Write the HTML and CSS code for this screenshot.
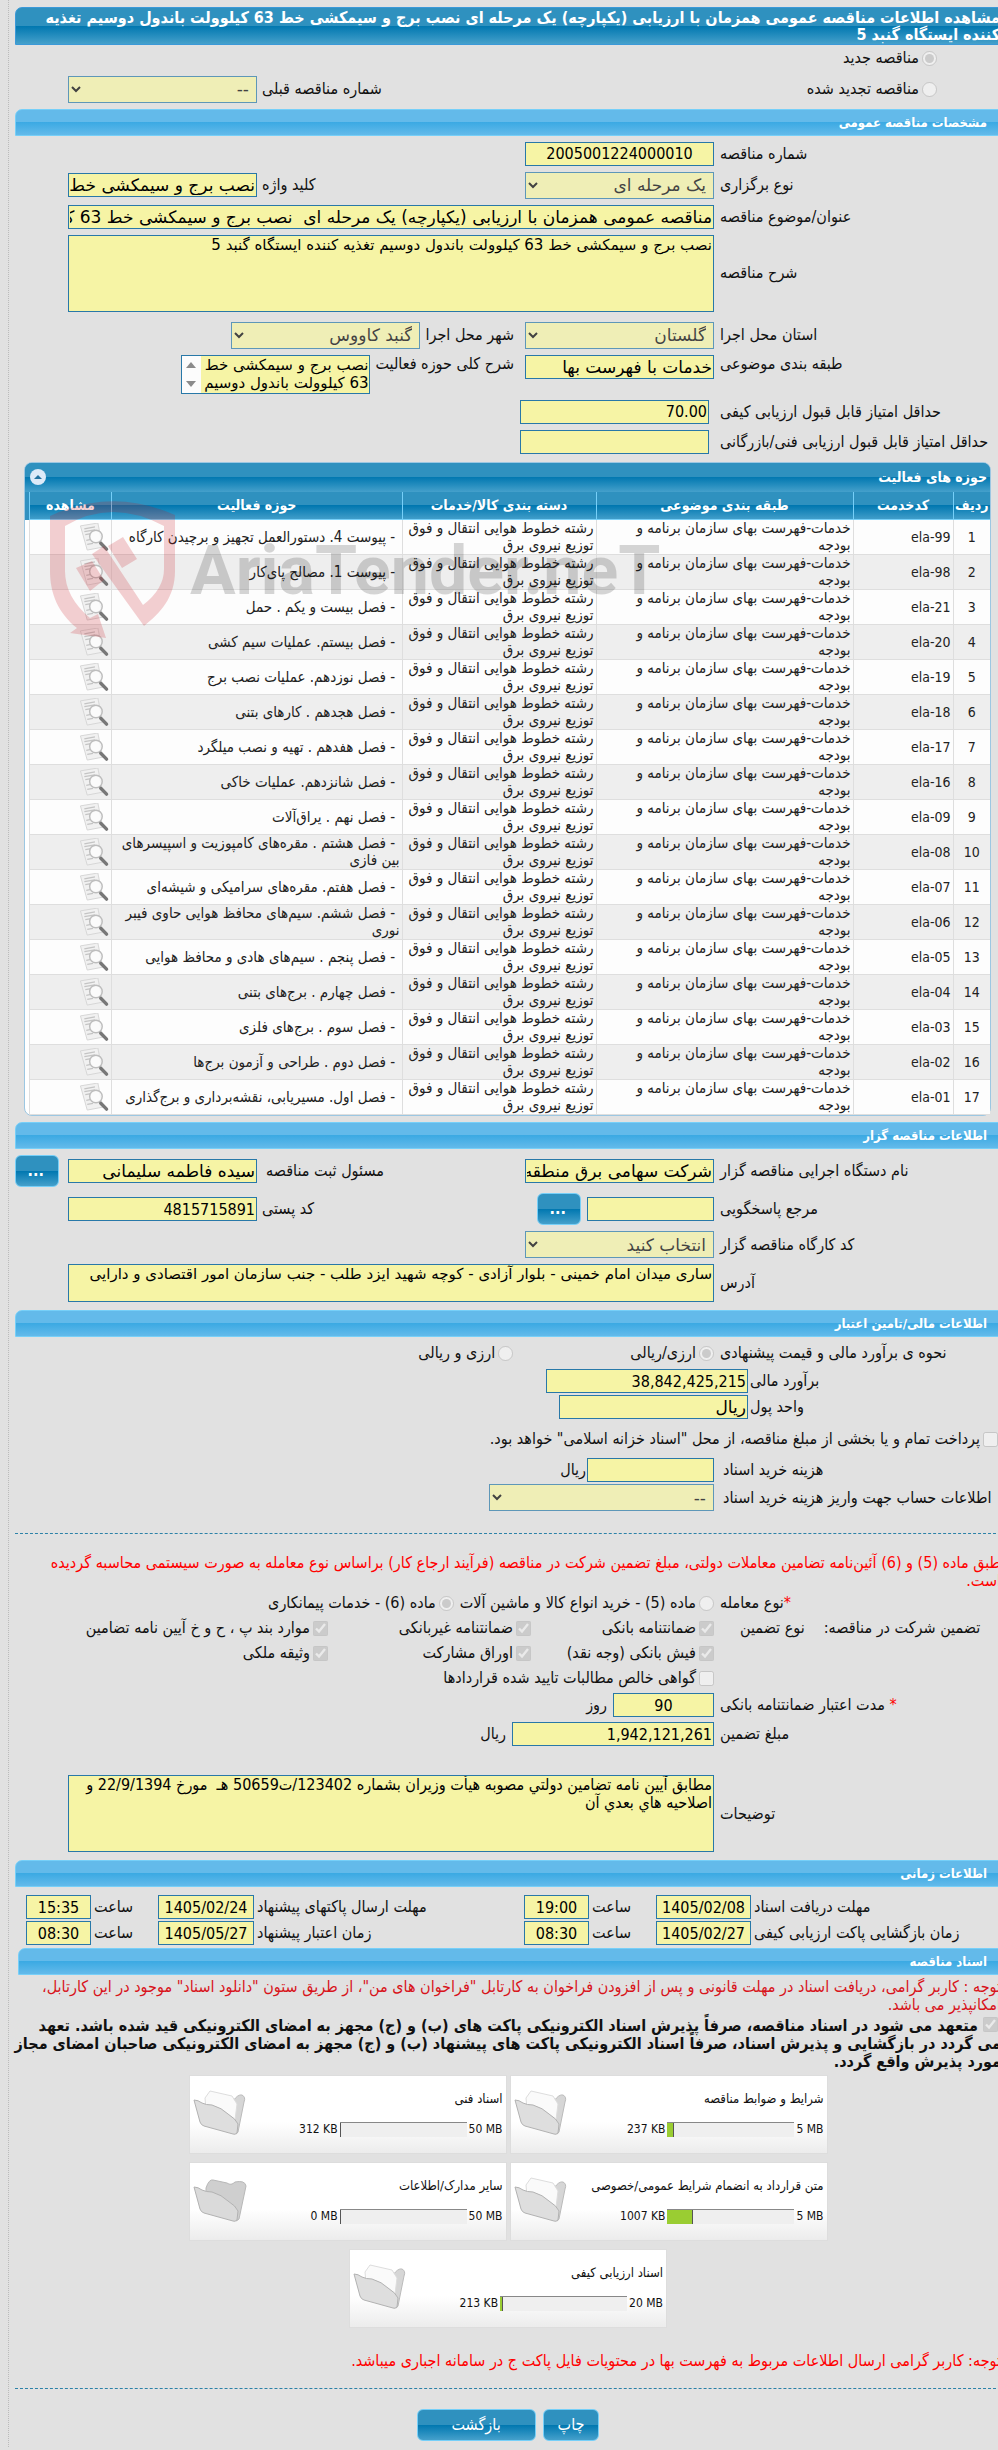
FILE: index.html
```html
<!DOCTYPE html>
<html lang="fa" dir="rtl">
  <head>
    <meta charset="utf-8" />
    <meta name="viewport" content="width=device-width, initial-scale=1.0" />
    <title>مشاهده اطلاعات مناقصه عمومی</title>
    <link rel="stylesheet" href="styles.css">
  </head>
  <body>
    <svg class="sprite" aria-hidden="true">
      <symbol id="view" viewBox="0 0 30 30">
        <path d="M1 3 19 0 24 25 8 28z" fill="#f1f1f1" stroke="#d6d6d6" />
        <path d="M5 6 16 4M5 9l11-2M6 12l6-1M7 18l5-1M8 22l6-1" stroke="#c4c4c4" stroke-width="1.3" />
        <circle cx="17" cy="14" r="6.5" fill="#fff" fill-opacity=".7" stroke="#bdbdbd" stroke-width="1.5" />
        <path d="M22 21l6 6" stroke="#777" stroke-width="3.5" stroke-linecap="round" />
      </symbol>
      <symbol id="folder" viewBox="0 0 54 50">
        <path d="M15 8 40 12Q45 5 49 6Q53 8 51 13L45 43Q44 46 41 44L13 34z" fill="#d6d6d6" stroke="#bbb" />
        <path d="M12 9l5-7 22 5 5 8-3 24-27-8z" fill="#fafafa" stroke="#ddd" />
        <path d="M1 11Q5 11 9 14Q13 16 19 16Q29 19 35 25Q43 30 45 35L44 44Q42 46 40 45L11 37Q8 36 7 33z" fill="#dedede" stroke="#b2b2b2" />
      </symbol>
      <symbol id="folder-empty" viewBox="0 0 54 50">
        <path d="M13 12Q16 3 20 4L34 7Q38 10 42 6Q52 4 53 10L46 43Q44 46 41 44L13 34z" fill="#cfcfcf" stroke="#b8b8b8" />
        <path d="M1 11Q5 11 9 14Q13 16 19 16Q29 19 35 25Q43 30 45 35L44 44Q42 46 40 45L11 37Q8 36 7 33z" fill="#dadada" stroke="#b2b2b2" />
      </symbol>
    </svg>

    <main class="page">
      <h1 class="title">مشاهده اطلاعات مناقصه عمومی همزمان با ارزیابی (یکپارچه) یک مرحله ای نصب برج و سیمکشی خط 63 کیلوولت باندول دوسیم تغذیه کننده ایستگاه گنبد 5</h1>

      <div class="kind">
        <label class="choice"><input type="radio" name="kind" checked disabled />مناقصه جدید</label>
        <div class="kind-old">
          <label class="choice"><input type="radio" name="kind" disabled />مناقصه تجدید شده</label>
          <div class="second">
            <label for="prev">شماره مناقصه قبلی</label>
            <select id="prev" class="std" disabled><option>--</option></select>
          </div>
        </div>
      </div>

      <h2 class="bar">مشخصات مناقصه عمومی</h2>
      <section class="form">
        <div class="row">
          <label for="no">شماره مناقصه</label>
          <div class="fields"><input id="no" class="std center" value="2005001224000010" disabled /></div>
        </div>
        <div class="row">
          <label for="type">نوع برگزاری</label>
          <div class="fields">
            <select id="type" class="std" disabled><option>یک مرحله ای</option></select>
            <div class="second">
              <label for="keyword">کلید واژه</label>
              <input id="keyword" class="std fa" value="نصب برج و سیمکشی خط 63 کیلوولت" disabled />
            </div>
          </div>
        </div>
        <div class="row">
          <label for="subject">عنوان/موضوع مناقصه</label>
          <div class="fields"><input id="subject" class="wide fa" value="مناقصه عمومی همزمان با ارزیابی (یکپارچه) یک مرحله ای  نصب برج و سیمکشی خط 63 کیلوولت باندول دوسیم" disabled /></div>
        </div>
        <div class="row roomy">
          <label for="desc">شرح مناقصه</label>
          <div class="fields"><textarea id="desc" class="wide tall" disabled>نصب برج و سیمکشی خط 63 کیلوولت باندول دوسیم تغذیه کننده ایستگاه گنبد 5</textarea></div>
        </div>
        <div class="row">
          <label for="province">استان محل اجرا</label>
          <div class="fields next-to">
            <select id="province" class="std" disabled><option>گلستان</option></select>
            <div class="next">
              <label for="city">شهر محل اجرا</label>
              <select id="city" class="std" disabled><option>گنبد کاووس</option></select>
            </div>
          </div>
        </div>
        <div class="row top">
          <label for="category">طبقه بندی موضوعی</label>
          <div class="fields next-to">
            <input id="category" class="std fa" value="خدمات با فهرست بها" disabled />
            <div class="next">
              <label for="field">شرح کلی حوزه فعالیت</label>
              <div class="scroller">
                <textarea id="field" disabled>نصب برج و سیمکشی خط 63 کیلوولت باندول دوسیم</textarea>
                <span class="arrows">
                  <svg viewBox="0 0 10 6"><path d="M0 6 5 0 10 6z" fill="#8b8b8b" /></svg>
                  <svg viewBox="0 0 10 6"><path d="M0 0 5 6 10 0z" fill="#8b8b8b" /></svg>
                </span>
              </div>
            </div>
          </div>
        </div>
        <div class="row indent">
          <label for="quality">حداقل امتیاز قابل قبول ارزیابی کیفی</label>
          <div class="fields"><input id="quality" class="std num" value="70.00" disabled /></div>
        </div>
        <div class="row indent">
          <label for="tech">حداقل امتیاز قابل قبول ارزیابی فنی/بازرگانی</label>
          <div class="fields"><input id="tech" class="std num" disabled /></div>
        </div>
      </section>

      <section class="panel">
        <div class="panel-head">
          <h3>حوزه های فعالیت</h3>
          <button class="collapse" type="button" aria-label="بستن"><svg viewBox="0 0 16 16"><circle cx="8" cy="8" r="8" fill="#dceaf8" /><path d="M4 10 8 6 12 10z" fill="#2372a0" /></svg></button>
        </div>
        <table>
          <colgroup><col class="c-row" /><col class="c-code" /><col class="c-cat" /><col class="c-group" /><col /><col class="c-view" /></colgroup>
          <thead>
            <tr><th>ردیف</th><th>کدخدمت</th><th>طبقه بندی موضوعی</th><th>دسته بندی کالا/خدمات</th><th>حوزه فعالیت</th><th>مشاهده</th></tr>
          </thead>
          <tbody>
            <tr><td>1</td><td>ela-99</td><td>خدمات-فهرست بهای سازمان برنامه و بودجه</td><td>رشته خطوط هوایی انتقال و فوق توزیع نیروی برق</td><td>&nbsp;- پیوست 4. دستورالعمل تجهیز و برچیدن کارگاه</td><td><svg class="view"><use href="#view" /></svg></td></tr>
            <tr><td>2</td><td>ela-98</td><td>خدمات-فهرست بهای سازمان برنامه و بودجه</td><td>رشته خطوط هوایی انتقال و فوق توزیع نیروی برق</td><td>&nbsp;- پیوست 1. مصالح پای‌کار</td><td><svg class="view"><use href="#view" /></svg></td></tr>
            <tr><td>3</td><td>ela-21</td><td>خدمات-فهرست بهای سازمان برنامه و بودجه</td><td>رشته خطوط هوایی انتقال و فوق توزیع نیروی برق</td><td>&nbsp;- فصل بیست و یکم . حمل</td><td><svg class="view"><use href="#view" /></svg></td></tr>
            <tr><td>4</td><td>ela-20</td><td>خدمات-فهرست بهای سازمان برنامه و بودجه</td><td>رشته خطوط هوایی انتقال و فوق توزیع نیروی برق</td><td>&nbsp;- فصل بیستم. عملیات سیم کشی</td><td><svg class="view"><use href="#view" /></svg></td></tr>
            <tr><td>5</td><td>ela-19</td><td>خدمات-فهرست بهای سازمان برنامه و بودجه</td><td>رشته خطوط هوایی انتقال و فوق توزیع نیروی برق</td><td>&nbsp;- فصل نوزدهم. عملیات نصب برج</td><td><svg class="view"><use href="#view" /></svg></td></tr>
            <tr><td>6</td><td>ela-18</td><td>خدمات-فهرست بهای سازمان برنامه و بودجه</td><td>رشته خطوط هوایی انتقال و فوق توزیع نیروی برق</td><td>&nbsp;- فصل هجدهم . کارهای بتنی</td><td><svg class="view"><use href="#view" /></svg></td></tr>
            <tr><td>7</td><td>ela-17</td><td>خدمات-فهرست بهای سازمان برنامه و بودجه</td><td>رشته خطوط هوایی انتقال و فوق توزیع نیروی برق</td><td>&nbsp;- فصل هفدهم . تهیه و نصب میلگرد</td><td><svg class="view"><use href="#view" /></svg></td></tr>
            <tr><td>8</td><td>ela-16</td><td>خدمات-فهرست بهای سازمان برنامه و بودجه</td><td>رشته خطوط هوایی انتقال و فوق توزیع نیروی برق</td><td>&nbsp;- فصل شانزدهم. عملیات خاکی</td><td><svg class="view"><use href="#view" /></svg></td></tr>
            <tr><td>9</td><td>ela-09</td><td>خدمات-فهرست بهای سازمان برنامه و بودجه</td><td>رشته خطوط هوایی انتقال و فوق توزیع نیروی برق</td><td>&nbsp;- فصل نهم . یراق‌آلات</td><td><svg class="view"><use href="#view" /></svg></td></tr>
            <tr><td>10</td><td>ela-08</td><td>خدمات-فهرست بهای سازمان برنامه و بودجه</td><td>رشته خطوط هوایی انتقال و فوق توزیع نیروی برق</td><td>&nbsp;- فصل هشتم . مقره‌های کامپوزیت و اسپیسرهای بین فازی</td><td><svg class="view"><use href="#view" /></svg></td></tr>
            <tr><td>11</td><td>ela-07</td><td>خدمات-فهرست بهای سازمان برنامه و بودجه</td><td>رشته خطوط هوایی انتقال و فوق توزیع نیروی برق</td><td>&nbsp;- فصل هفتم. مقره‌های سرامیکی و شیشه‌ای</td><td><svg class="view"><use href="#view" /></svg></td></tr>
            <tr><td>12</td><td>ela-06</td><td>خدمات-فهرست بهای سازمان برنامه و بودجه</td><td>رشته خطوط هوایی انتقال و فوق توزیع نیروی برق</td><td>&nbsp;- فصل ششم. سیم‌های محافظ هوایی حاوی فیبر نوری</td><td><svg class="view"><use href="#view" /></svg></td></tr>
            <tr><td>13</td><td>ela-05</td><td>خدمات-فهرست بهای سازمان برنامه و بودجه</td><td>رشته خطوط هوایی انتقال و فوق توزیع نیروی برق</td><td>&nbsp;- فصل پنجم . سیم‌های هادی و محافظ هوایی</td><td><svg class="view"><use href="#view" /></svg></td></tr>
            <tr><td>14</td><td>ela-04</td><td>خدمات-فهرست بهای سازمان برنامه و بودجه</td><td>رشته خطوط هوایی انتقال و فوق توزیع نیروی برق</td><td>&nbsp;- فصل چهارم . برج‌های بتنی</td><td><svg class="view"><use href="#view" /></svg></td></tr>
            <tr><td>15</td><td>ela-03</td><td>خدمات-فهرست بهای سازمان برنامه و بودجه</td><td>رشته خطوط هوایی انتقال و فوق توزیع نیروی برق</td><td>&nbsp;- فصل سوم . برج‌های فلزی</td><td><svg class="view"><use href="#view" /></svg></td></tr>
            <tr><td>16</td><td>ela-02</td><td>خدمات-فهرست بهای سازمان برنامه و بودجه</td><td>رشته خطوط هوایی انتقال و فوق توزیع نیروی برق</td><td>&nbsp;- فصل دوم . طراحی و آزمون برج‌ها</td><td><svg class="view"><use href="#view" /></svg></td></tr>
            <tr><td>17</td><td>ela-01</td><td>خدمات-فهرست بهای سازمان برنامه و بودجه</td><td>رشته خطوط هوایی انتقال و فوق توزیع نیروی برق</td><td>&nbsp;- فصل اول. مسیریابی، نقشه‌برداری و برج‌گذاری</td><td><svg class="view"><use href="#view" /></svg></td></tr>
          </tbody>
        </table>
        <div class="watermark" dir="ltr">
          <svg viewBox="0 0 126 138">
            <path d="M0 15Q62-14 125 14V70C125 97 110 112 94 125L42 53 54 45 93 104Q114 88 114 68V25Q62 -3 15 25V70Q15 96 40 117L48 113 56 137 20 132 27 127C8 112 0 92 0 70z" />
            <path d="M58 45 73 36 87 58 72 67zM42 60 54 79 40 90 26 67z" />
          </svg>
          <span>AriaTender.neT</span>
        </div>
      </section>

      <h2 class="bar">اطلاعات مناقصه گزار</h2>
      <section class="form">
        <div class="row">
          <label for="org">نام دستگاه اجرایی مناقصه گزار</label>
          <div class="fields">
            <input id="org" class="std fa" value="شرکت سهامی برق منطقه ای" disabled />
            <div class="second has-btn">
              <label for="officer">مسئول ثبت مناقصه</label>
              <input id="officer" class="std fa" value="سیده فاطمه سلیمانی" disabled />
              <button class="btn dots" type="button">...</button>
            </div>
          </div>
        </div>
        <div class="row">
          <label for="ref">مرجع پاسخگویی</label>
          <div class="fields">
            <input id="ref" class="mid" disabled />
            <button class="btn dots" type="button">...</button>
            <div class="second">
              <label for="zip">کد پستی</label>
              <input id="zip" class="std num" value="4815715891" disabled />
            </div>
          </div>
        </div>
        <div class="row">
          <label for="site">کد کارگاه مناقصه گزار</label>
          <div class="fields"><select id="site" class="std" disabled><option>انتخاب کنید</option></select></div>
        </div>
        <div class="row">
          <label for="address">آدرس</label>
          <div class="fields"><textarea id="address" class="wide short" disabled>ساری میدان امام خمینی - بلوار آزادی - کوچه شهید ایزد طلب - جنب سازمان امور اقتصادی و دارایی</textarea></div>
        </div>
      </section>

      <h2 class="bar">اطلاعات مالی/تامین اعتبار</h2>
      <section class="form">
        <div class="row">
          <span>نحوه ی برآورد مالی و قیمت پیشنهادی</span>
          <div class="fields money">
            <label class="choice"><input type="radio" name="money" checked disabled />ارزی/ریالی</label>
            <label class="choice"><input type="radio" name="money" disabled />ارزی و ریالی</label>
          </div>
        </div>
        <div class="row near tight">
          <label for="estimate">برآورد مالی</label>
          <div class="fields"><input id="estimate" class="amount num" value="38,842,425,215" disabled /></div>
        </div>
        <div class="row near">
          <label for="unit">واحد پول</label>
          <div class="fields"><input id="unit" class="std fa" value="ریال" disabled /></div>
        </div>
        <label class="choice treasury"><input type="checkbox" disabled />پرداخت تمام و یا بخشی از مبلغ مناقصه، از محل "اسناد خزانه اسلامی" خواهد بود.</label>
        <div class="row far tight">
          <label for="price">هزینه خرید اسناد</label>
          <div class="fields unit"><input id="price" class="mid" disabled /><span>ریال</span></div>
        </div>
        <div class="row far">
          <label for="account">اطلاعات حساب جهت واریز هزینه خرید اسناد</label>
          <div class="fields"><select id="account" class="long" disabled><option>--</option></select></div>
        </div>
      </section>

      <hr />

      <p class="note guarantee-note">طبق ماده (5) و (6) آئین‌نامه تضامین معاملات دولتی، مبلغ تضمین شرکت در مناقصه (فرآیند ارجاع کار) براساس نوع معامله به صورت سیستمی محاسبه گردیده است.</p>
      <section class="form guarantee">
        <div class="row">
          <span><b class="star">*</b>نوع معامله</span>
          <div class="fields deal">
            <label class="choice"><input type="radio" name="deal" disabled />ماده (5) - خرید انواع کالا و ماشین آلات</label>
            <label class="choice"><input type="radio" name="deal" checked disabled />ماده (6) - خدمات پیمانکاری</label>
          </div>
        </div>
        <div class="row">
          <div class="lead"><span>تضمین شرکت در مناقصه:</span><span>نوع تضمین</span></div>
          <div class="fields checks">
            <label class="choice"><input type="checkbox" checked disabled />ضمانتنامه بانکی</label>
            <label class="choice"><input type="checkbox" checked disabled />ضمانتنامه غیربانکی</label>
            <label class="choice"><input type="checkbox" checked disabled />موارد بند پ ، ح و خ آیین نامه تضامین</label>
          </div>
        </div>
        <div class="row">
          <span></span>
          <div class="fields checks">
            <label class="choice"><input type="checkbox" checked disabled />فیش بانکی (وجه نقد)</label>
            <label class="choice"><input type="checkbox" checked disabled />اوراق مشارکت</label>
            <label class="choice"><input type="checkbox" checked disabled />وثیقه ملکی</label>
          </div>
        </div>
        <div class="row">
          <span></span>
          <div class="fields"><label class="choice"><input type="checkbox" disabled />گواهی خالص مطالبات تایید شده قراردادها</label></div>
        </div>
        <div class="row">
          <label for="days"><b class="star">*</b> مدت اعتبار ضمانتنامه بانکی</label>
          <div class="fields"><input id="days" class="small center" value="90" disabled /><span>روز</span></div>
        </div>
        <div class="row last">
          <label for="sum">مبلغ تضمین</label>
          <div class="fields"><input id="sum" class="amount num" value="1,942,121,261" disabled /><span>ریال</span></div>
        </div>
        <div class="row">
          <label for="remarks">توضیحات</label>
          <div class="fields"><textarea id="remarks" class="wide tall condensed" disabled>مطابق آیین نامه تضامین دولتي مصوبه هیأت وزیران بشماره 123402/ت50659 هـ  مورخ 22/9/1394 و اصلاحیه هاي بعدي آن</textarea></div>
        </div>
      </section>

      <h2 class="bar">اطلاعات زمانی</h2>
      <section class="times">
        <label for="d1">مهلت دریافت اسناد</label><input id="d1" value="1405/02/08" disabled />
        <label for="t1">ساعت</label><input id="t1" value="19:00" disabled />
        <label for="d2">مهلت ارسال پاکتهای پیشنهاد</label><input id="d2" value="1405/02/24" disabled />
        <label for="t2">ساعت</label><input id="t2" value="15:35" disabled />
        <label for="d3">زمان بازگشایی پاکت ارزیابی کیفی</label><input id="d3" value="1405/02/27" disabled />
        <label for="t3">ساعت</label><input id="t3" value="08:30" disabled />
        <label for="d4">زمان اعتبار پیشنهاد</label><input id="d4" value="1405/05/27" disabled />
        <label for="t4">ساعت</label><input id="t4" value="08:30" disabled />
      </section>

      <h2 class="bar docs-bar">اسناد مناقصه</h2>
      <p class="warning">توجه : کاربر گرامی، دریافت اسناد در مهلت قانونی و پس از افزودن فراخوان به کارتابل "فراخوان های من"، از طریق ستون "دانلود اسناد" موجود در این کارتابل، امکانپذیر می باشد.</p>
      <label class="commit"><input type="checkbox" checked disabled /> متعهد می شود در اسناد مناقصه، صرفاً پذیرش اسناد الکترونیکی پاکت های (ب) و (ج) مجهز به امضای الکترونیکی قید شده باشد. تعهد می&nbsp;گردد در بازگشایی و پذیرش اسناد، صرفاً اسناد الکترونیکی پاکت های پیشنهاد (ب) و (ج) مجهز به امضای الکترونیکی صاحبان امضای مجاز مورد پذیرش واقع گردد.</label>

      <div class="docs">
        <article class="doc">
          <div><h4>شرایط و ضوابط مناقصه</h4><div class="usage" dir="ltr"><span>237 KB</span><div class="meter"><i style="width: 5%"></i></div><span>5 MB</span></div></div>
          <svg class="folder"><use href="#folder" /></svg>
        </article>
        <article class="doc">
          <div><h4>اسناد فنی</h4><div class="usage" dir="ltr"><span>312 KB</span><div class="meter"><i style="width: 1%"></i></div><span>50 MB</span></div></div>
          <svg class="folder"><use href="#folder" /></svg>
        </article>
        <article class="doc">
          <div><h4>متن قرارداد به انضمام شرایط عمومی/خصوصی</h4><div class="usage" dir="ltr"><span>1007 KB</span><div class="meter"><i style="width: 20%"></i></div><span>5 MB</span></div></div>
          <svg class="folder"><use href="#folder" /></svg>
        </article>
        <article class="doc">
          <div><h4>سایر مدارک/اطلاعات</h4><div class="usage" dir="ltr"><span>0 MB</span><div class="meter"><i style="width: 0%"></i></div><span>50 MB</span></div></div>
          <svg class="folder"><use href="#folder-empty" /></svg>
        </article>
        <article class="doc">
          <div><h4>اسناد ارزیابی کیفی</h4><div class="usage" dir="ltr"><span>213 KB</span><div class="meter"><i style="width: 2%"></i></div><span>20 MB</span></div></div>
          <svg class="folder"><use href="#folder" /></svg>
        </article>
      </div>

      <p class="note">توجه: کاربر گرامی ارسال اطلاعات مربوط به فهرست بها در محتویات فایل پاکت ج در سامانه اجباری میباشد.</p>
      <hr class="end" />
      <div class="actions">
        <button class="btn" type="button">چاپ</button>
        <button class="btn back" type="button">بازگشت</button>
      </div>
    </main>
  </body>
</html>
```
FILE: styles.css
```css
* {
  box-sizing: border-box;
}

body {
  margin: 0;
  background: #e1e1e1;
  color: #111;
  font: 16px/18px "DejaVu Sans Condensed", "DejaVu Sans", sans-serif;
  overflow-x: hidden;
}

h1,
h2,
h3,
h4,
p {
  margin: 0;
}

.sprite {
  display: none;
}

/* the right edge runs slightly past the window */
.page {
  margin-right: -3px;
  margin-left: 8px;
  padding: 7px 0 6px 6px;
  border-left: 1px dotted #bbb;
}

.title {
  padding: 1px 0;
  border: 1px solid #3b99d8;
  border-top-left-radius: 7px;
  background: linear-gradient(#2f91bf 50%, #0077b0 50%, #45a0cb);
  color: #fff;
  font-size: 16px;
  line-height: 17px;
}

.bar {
  height: 27px;
  padding-right: 13px;
  border: 1px solid #76cff8;
  border-top-left-radius: 7px;
  background: linear-gradient(#63baea 48%, #3aa9e3 48%, #63baea);
  color: #fff;
  font-size: 13px;
  line-height: 26px;
}

/* controls */
input:not([type="radio"], [type="checkbox"]),
select,
textarea {
  margin: 0;
  padding: 0 1px;
  border: 1px solid #2878a8;
  border-radius: 0;
  background: #f6f4a5;
  color: #000;
  font: 16px/20px "DejaVu Sans Condensed", "DejaVu Sans", sans-serif;
}

input:not([type="radio"], [type="checkbox"]) {
  height: 24px;
}

input.fa,
select {
  font-family: "DejaVu Sans", sans-serif;
  font-size: 17px;
}

select {
  height: 27px;
  padding: 0 3px;
}

textarea {
  display: block;
  resize: none;
  overflow: hidden;
  font: 15px/18px "DejaVu Sans", sans-serif;
}

.condensed {
  font: 16px/18px "DejaVu Sans Condensed", "DejaVu Sans", sans-serif;
}

input[type="radio"],
input[type="checkbox"] {
  width: 15px;
  height: 15px;
  margin: 0;
  flex: none;
}

.std {
  width: 189px;
}

.mid {
  width: 127px;
}

.amount {
  width: 202px;
}

.long {
  width: 225px;
}

.small {
  width: 101px;
}

.fields .wide {
  flex: 1;
  margin-left: 53px;
}

.tall {
  height: 77px;
}

.short {
  height: 38px;
}

.center {
  text-align: center;
}

.num {
  direction: ltr;
  text-align: right;
}

.choice {
  display: inline-flex;
  align-items: center;
  gap: 3px;
  white-space: nowrap;
}

/* form rows */
.kind {
  padding: 4px 64px 6px 0;
}

.kind-old {
  display: flex;
  align-items: center;
  margin-top: 6px;
}

.form {
  display: flex;
  flex-direction: column;
  gap: 6px;
  padding: 6px 0 8px;
}

.row {
  display: grid;
  grid-template-columns: 281px minmax(0, 1fr);
  column-gap: 6px;
  align-items: center;
  min-height: 20px;
  white-space: nowrap;
}

.row > :first-child {
  text-align: left;
}

.row textarea {
  white-space: pre-wrap;
}

.row.top {
  align-items: start;
}

.row.indent {
  column-gap: 11px;
}

.row.near {
  grid-template-columns: 251px minmax(0, 1fr);
  column-gap: 2px;
}

.row.far {
  grid-template-columns: 278px minmax(0, 1fr);
  column-gap: 9px;
}

.row.tight {
  margin-bottom: -4px;
}

.row.roomy {
  margin-bottom: 4px;
}

.fields {
  display: flex;
  align-items: center;
  gap: 6px;
}

.fields.unit {
  gap: 1px;
}

.fields.next-to {
  gap: 11px;
}

.top .fields,
.top .next {
  align-items: start;
}

.second,
.next {
  display: flex;
  align-items: center;
  gap: 5px;
}

.second {
  margin-right: auto;
  margin-left: 53px;
}

.second.has-btn {
  gap: 9px;
  margin-left: 0;
}

.scroller {
  display: flex;
  width: 189px;
  height: 39px;
  border: 1px solid #2878a8;
}

.scroller textarea {
  flex: 1;
  min-width: 0;
  border: 0;
}

.arrows {
  display: flex;
  flex-direction: column;
  justify-content: space-between;
  width: 19px;
  padding: 6px 5px;
  background: #fcfcfc;
}

.arrows svg {
  display: block;
  width: 10px;
  height: 6px;
}

.money {
  gap: 117px;
}

.treasury {
  padding-right: 3px;
  margin: 5px 0 4px;
}

.deal {
  gap: 6px;
}

.lead {
  display: flex;
  justify-content: flex-end;
  gap: 19px;
  padding-left: 20px;
}

.checks {
  display: grid;
  grid-template-columns: 177px 197px 1fr;
}

.star {
  color: red;
  font-weight: 400;
}

.guarantee {
  gap: 5px;
  padding-top: 3px;
}

.guarantee .last {
  margin-bottom: 24px;
}

hr {
  margin: 14px 0 20px;
  border: 0;
  border-top: 1px dashed #2d82a8;
}

hr.end {
  margin: 18px 0 20px;
}

.note {
  color: #f00;
}

.guarantee-note {
  padding-left: 9px;
}

.warning {
  padding: 3px 0;
  color: #d8141b;
}

.commit {
  display: block;
  margin-left: -5px;
  font-weight: 700;
}

.commit input {
  margin-right: 3px;
  vertical-align: -1px;
}

/* activity table */
.panel {
  position: relative;
  margin: 0 10px 6px 9px;
  padding-left: 4px;
  border: 1px solid #9cc7e2;
  border-radius: 8px;
  background: linear-gradient(#3191c0 57px, #fff 57px);
}

.panel-head {
  display: flex;
  align-items: center;
  justify-content: space-between;
  height: 29px;
  margin-left: -4px;
  padding: 0 3px 0 5px;
  border-radius: 7px 7px 0 0;
  background: linear-gradient(#2f91bf 48%, #0077b0 48%, #45a0cb);
  color: #fff;
}

.panel-head h3 {
  font-size: 14px;
}

.collapse {
  width: 16px;
  height: 16px;
  padding: 0;
  border: 0;
  background: none;
}

.collapse svg {
  display: block;
}

table {
  width: 100%;
  table-layout: fixed;
  border-collapse: collapse;
  font-size: 15px;
  line-height: 17px;
}

.c-row {
  width: 37px;
}

.c-code {
  width: 100px;
}

.c-cat {
  width: 257px;
}

.c-group {
  width: 194px;
}

.c-view {
  width: 82px;
}

thead tr {
  height: 28px;
  background: linear-gradient(#2f91bf 48%, #0077b0 48%, #45a0cb);
}

th {
  padding: 0;
  border-left: 1px solid #76cff8;
  border-bottom: 1px solid #76cff8;
  color: #fff;
  font-size: 14px;
  white-space: nowrap;
}

tbody tr {
  height: 35px;
  background: #fdfdfd;
}

tbody tr:nth-child(even) {
  background: #eee;
}

td {
  padding: 0 2px;
  border-left: 1px solid #dedede;
  border-bottom: 1px solid #dedede;
  color: #222;
}

td:nth-child(-n + 2) {
  font-size: 14px;
}

td:first-child {
  text-align: center;
}

td:nth-child(3) {
  padding-left: 12px;
}

.view {
  display: block;
  width: 30px;
  height: 29px;
}

.watermark {
  position: absolute;
  top: 38px;
  left: 25px;
  display: flex;
  gap: 14px;
  pointer-events: none;
}

.watermark svg {
  width: 126px;
  height: 138px;
  fill: rgba(200, 20, 30, 0.2);
}

.watermark span {
  padding-top: 26px;
  color: rgba(0, 0, 0, 0.16);
  font: 700 68px/88px Roboto, sans-serif;
}

/* dates */
.times {
  display: grid;
  grid-template-columns: 247px 95px 61px 65px minmax(0, 1fr) 96px 61px 65px;
  gap: 2px 3px;
  align-items: center;
  padding: 8px 0 3px 11px;
  text-align: left;
  white-space: nowrap;
}

.times input {
  width: 100%;
  text-align: center;
}

.docs-bar {
  margin-left: 3px;
}

/* documents */
.docs {
  display: flex;
  flex-wrap: wrap;
  justify-content: center;
  gap: 8px 3px;
  max-width: 660px;
  margin: 4px auto 24px;
}

.doc {
  display: flex;
  justify-content: space-between;
  width: 318px;
  height: 79px;
  padding: 13px 3px;
  border: 1px solid #ddd;
  background: linear-gradient(#fff 60%, #ececec);
  font-size: 12px;
}

.doc h4 {
  font-size: 13px;
  font-weight: 400;
  line-height: 20px;
  white-space: nowrap;
}

.usage {
  display: flex;
  justify-content: flex-end;
  align-items: center;
  gap: 2px;
  margin-top: 13px;
  line-height: 15px;
}

.meter {
  width: 127px;
  height: 15px;
  border-top: 1px solid #888;
  background: #efefef;
}

.meter i {
  display: block;
  height: 14px;
  border-right: 1px solid #555;
  background: #9acd32;
}

.folder {
  flex: none;
  width: 54px;
  height: 50px;
}

.btn {
  height: 32px;
  padding: 0 14px;
  border: 1px solid #76cff8;
  border-radius: 6px;
  background: linear-gradient(#2f91bf 50%, #0077b0 50%, #45a0cb);
  color: #fff;
  font: 16px/20px "DejaVu Sans Condensed", "DejaVu Sans", sans-serif;
}

.dots {
  width: 44px;
  font-weight: 700;
}

.actions {
  display: flex;
  justify-content: center;
  gap: 7px;
}

.back {
  width: 119px;
}
```
